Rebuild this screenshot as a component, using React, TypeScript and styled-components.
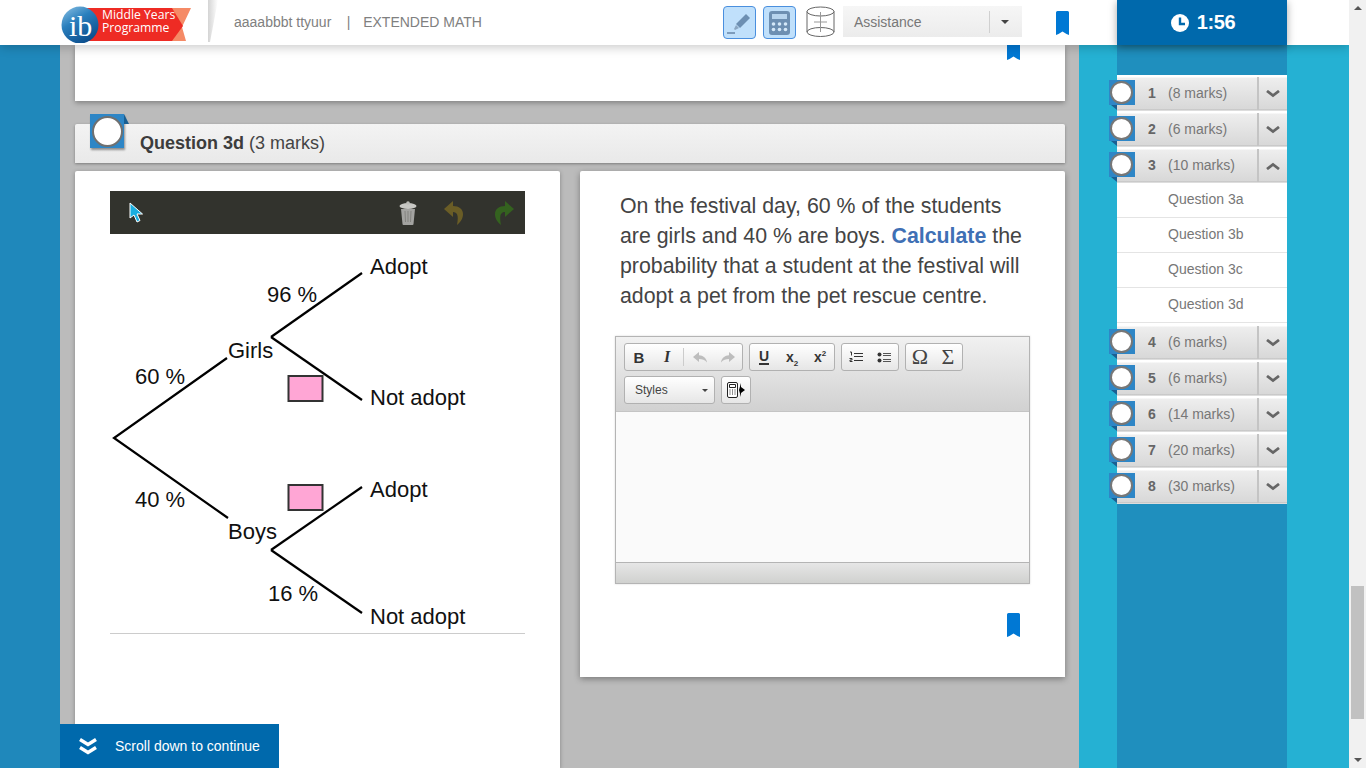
import styled, { createGlobalStyle } from 'styled-components'

const GlobalStyle = createGlobalStyle`
  html, body {
    margin: 0;
    height: 100%;
    overflow: hidden;
  }
  body {
    font-family: "Liberation Sans", Arial, sans-serif;
  }
  * {
    box-sizing: border-box;
  }
`

const Page = styled.div`
  width: 1366px;
  height: 768px;
  display: grid;
  grid-template-columns: 1349px 17px;
  overflow: hidden;
`

const Main = styled.div`
  position: relative;
  display: flex;
  flex-direction: column;
  height: 768px;
  overflow: hidden;
`

/* header */
const Header = styled.header`
  position: relative;
  z-index: 5;
  flex: none;
  height: 45px;
  background: #fff;
  box-shadow: 0 2px 10px rgba(0, 0, 0, 0.22);
  display: flex;
  align-items: center;
  padding-left: 61px;
`

const Slash = styled.div`
  width: 10px;
  height: 42px;
  margin: 0 16px 3px 17px;
  background: linear-gradient(90deg, #d4d4d4, #fff);
  clip-path: polygon(0 0, 100% 0, 20% 100%, 0 100%);
`

const Crumb = styled.span`
  font-size: 14px;
  color: #808080;
  white-space: pre;
  margin-bottom: 1px;
`

const Subject = styled(Crumb)`
  margin-left: 1px;
`

const Tools = styled.div`
  margin-left: 241px;
  display: flex;
  gap: 7px;
  align-items: center;
`

const ToolButton = styled.button`
  width: 33px;
  height: 33px;
  padding: 0;
  display: grid;
  place-items: center;
  background: #c0e0fb;
  border: 1px solid #4a8fde;
  border-radius: 4px;
`

const CylinderSlot = styled.div`
  margin: 0 0 2px 3px;
  height: 32px;
`

const Assistance = styled.div`
  width: 179px;
  height: 31px;
  margin: 0 34px 2px 8px;
  display: flex;
  align-items: center;
  background: linear-gradient(#f6f6f6, #ececec);
  font-size: 14px;
  color: #777;
  padding-left: 11px;
`

const AssistanceLabel = styled.span`
  width: 135px;
`

const AssistanceCaret = styled.span`
  height: 22px;
  flex: 1;
  border-left: 1px solid #d0d0d0;
  display: grid;
  place-items: center;
  padding-right: 2px;

  &::after {
    content: '';
    border: 4px solid transparent;
    border-top: 4px solid #444;
    border-bottom: 0;
  }
`

const Timer = styled.div`
  margin-left: auto;
  margin-right: 62px;
  width: 170px;
  height: 45px;
  background: #0069ac;
  box-shadow: 0 2px 8px rgba(0, 0, 0, 0.35);
  color: #fff;
  font-size: 20px;
  font-weight: 700;
  letter-spacing: -0.4px;
  display: flex;
  align-items: center;
  justify-content: center;
  gap: 8px;
  padding-left: 2px;
`

/* body columns */
const Columns = styled.div`
  flex: 1;
  display: grid;
  grid-template-columns: 60px 1019px 270px;
  min-height: 0;
`

const LeftStrip = styled.div`
  background: #1f88bb;
`

const Center = styled.main`
  background: #bbb;
  padding: 0 14px 0 15px;
  overflow: hidden;
`

const TopCard = styled.section`
  height: 56px;
  background: #fff;
  box-shadow: 0 2px 5px rgba(0, 0, 0, 0.3);
  display: flex;
  justify-content: flex-end;
  padding-right: 45px;
  overflow: hidden;
`

const TopMark = styled.div`
  margin-top: -9px;
`

const QuestionBar = styled.div`
  position: relative;
  height: 39px;
  margin-top: 23px;
  padding-left: 65px;
  display: flex;
  align-items: center;
  background: linear-gradient(#f3f3f3, #e9e9e9);
  border-radius: 2px 2px 0 0;
  box-shadow: 0 1px 3px rgba(0, 0, 0, 0.35);
  font-size: 18px;
  color: #444;
  white-space: pre;

  b {
    color: #3c3c3c;
  }
`

const QuestionBadge = styled.div`
  position: absolute;
  left: 15px;
  top: -10px;
  width: 34px;
  height: 34px;
  background: #2e86c6;
  box-shadow: 1px 2px 2px rgba(0, 0, 0, 0.4);
  display: grid;
  place-items: center;

  &::before {
    content: '';
    position: absolute;
    left: 100%;
    top: 0;
    border-left: 5px solid #1a5f92;
    border-top: 10px solid transparent;
  }
`

const QuestionCircle = styled.div`
  width: 31px;
  height: 31px;
  border-radius: 50%;
  background: #fff;
  border: 2px solid #707070;
`

const Panels = styled.div`
  display: grid;
  grid-template-columns: 485px 485px;
  column-gap: 20px;
  align-items: start;
  margin-top: 8px;
`

const DrawingPanel = styled.section`
  height: 597px;
  background: #fff;
  padding: 20px 35px 0;
  box-shadow: 0 1px 4px rgba(0, 0, 0, 0.3);
  border-radius: 2px 2px 0 0;
`

const DrawingBar = styled.div`
  height: 43px;
  background: #32332d;
  display: flex;
  align-items: center;
  padding-left: 19px;
`

const DrawingSpacer = styled.div`
  flex: 1;
`

const DrawingTool = styled.div<{ $width: number }>`
  width: ${({ $width }) => $width}px;
  display: grid;
  place-items: center;
`

const TreeFrame = styled.div`
  height: 400px;
  border-bottom: 1px solid #ccc;
`

const QuestionPanel = styled.section`
  height: 506px;
  background: #fff;
  padding: 20px 35px 0;
  box-shadow: 0 2px 6px rgba(0, 0, 0, 0.35);
  border-radius: 2px 2px 0 0;
`

const Prompt = styled.p`
  margin: 0 0 0 5px;
  font-size: 21.33px;
  line-height: 30px;
  color: #444;
  width: 416px;

  b {
    color: #3f70b5;
  }
`

const Editor = styled.div`
  margin-top: 25px;
  height: 248px;
  border: 1px solid #b4b4b4;
  box-shadow: 0 0 2px rgba(0, 0, 0, 0.15);
  display: flex;
  flex-direction: column;
`

const EditorTools = styled.div`
  height: 75px;
  flex: none;
  padding: 6px 8px 0;
  background: linear-gradient(#f1f1f1, #d1d1d1);
  border-bottom: 1px solid #c4c4c4;
  display: flex;
  flex-direction: column;
  gap: 5px;
`

const ToolRow = styled.div`
  display: flex;
  gap: 6px;
`

const BtnGroup = styled.div`
  height: 28px;
  display: flex;
  align-items: center;
  background: linear-gradient(#fff, #e6e6e6);
  border: 1px solid #b1b1b1;
  border-radius: 3px;
`

const Cell = styled.div`
  width: 28px;
  height: 26px;
  display: grid;
  place-items: center;
  color: #333;
`

const Sep = styled.div`
  width: 1px;
  height: 18px;
  margin: 0 2px;
  background: #ccc;
`

const BoldGlyph = styled.span`
  font-size: 15px;
  font-weight: 700;
`

const ItalicGlyph = styled.span`
  font-family: "Liberation Serif", serif;
  font-size: 16px;
  font-weight: 700;
  font-style: italic;
`

const UnderGlyph = styled.span`
  font-size: 14px;
  font-weight: 700;
  line-height: 14px;
  border-bottom: 2px solid #333;
`

const ScriptGlyph = styled.span`
  font-size: 14px;
  font-weight: 700;

  sub, sup {
    font-size: 8px;
    line-height: 0;
  }
`

const MathGlyph = styled.span`
  font-family: "Liberation Serif", serif;
  font-size: 22px;
  line-height: 22px;
  color: #444;
`

const StylesSelect = styled(BtnGroup)`
  width: 91px;
  padding: 0 6px 0 10px;
  justify-content: space-between;
  font-size: 12px;
  color: #444;

  &::after {
    content: '';
    border: 3px solid transparent;
    border-top: 3px solid #444;
    border-bottom: 0;
  }
`

const EditorArea = styled.div`
  flex: 1;
  background: #fafafa;
  border-bottom: 1px solid #b4b4b4;
`

const EditorStatus = styled.div`
  height: 20px;
  flex: none;
  background: linear-gradient(#e6e6e6, #d0d1cf);
`

const BottomMark = styled.div`
  margin: 29px 10px 0 0;
  display: flex;
  justify-content: flex-end;
`

/* right nav */
const RightStrip = styled.aside`
  background: #25b1d3;
  padding: 0 62px 0 38px;
`

const NavColumn = styled.nav`
  height: 100%;
  background: #1f8fbe;
  padding-top: 30px;
`

const NavList = styled.div`
  display: flex;
  flex-direction: column;
  background: #fff;
`

const NavRow = styled.div`
  position: relative;
  height: 36px;
  display: flex;
  align-items: center;
  background: linear-gradient(#fff 0, #fff 2px, #eee 3px, #d8d8d8 34px, #bbb 35px, #fff 36px);
  font-size: 14px;
  color: #777;
`

const RowBadge = styled.div`
  position: absolute;
  left: -8px;
  top: 5px;
  width: 26px;
  height: 25px;
  background: #2e86c6;
  display: grid;
  place-items: center;

  &::after {
    content: '';
    position: absolute;
    left: 2px;
    top: 100%;
    border-left: 6px solid transparent;
    border-top: 5px solid #1a5f92;
  }
`

const RowCircle = styled.div`
  width: 23px;
  height: 23px;
  margin-right: 2px;
  border-radius: 50%;
  background: #fff;
  border: 2px solid #777;
`

const RowNumber = styled.b`
  width: 20px;
  margin-left: 31px;
  color: #666;
  font-size: 14px;
`

const RowMarks = styled.span`
  flex: 1;
`

const RowToggle = styled.div`
  width: 30px;
  height: 33px;
  border-left: 2px solid #c4c4c4;
  display: grid;
  place-items: center;
  padding-top: 2px;
`

const SubList = styled.div`
  padding-bottom: 1px;
`

const SubItem = styled.div`
  height: 35px;
  display: flex;
  align-items: center;
  padding: 0 0 2px 51px;
  font-size: 14px;
  color: #777;
  border-bottom: 1px solid #e4e4e4;
`

/* floating scroll hint */
const ScrollHint = styled.div`
  position: absolute;
  left: 60px;
  bottom: 0;
  z-index: 4;
  width: 219px;
  height: 44px;
  background: #0069ac;
  color: #fff;
  font-size: 14px;
  display: flex;
  align-items: center;
  gap: 18px;
  padding-left: 19px;
`

/* scrollbar */
const Scrollbar = styled.div`
  background: #f1f1f1;
  display: flex;
  flex-direction: column;
  align-items: center;
`

const ScrollArrow = styled.div<{ $down?: boolean }>`
  width: 0;
  margin: ${({ $down }) => ($down ? 'auto 0 6px' : '6px 0 0')};
  border: 4px solid transparent;
  ${({ $down }) =>
    $down
      ? 'border-top: 4px solid #555; border-bottom: 0;'
      : 'border-bottom: 4px solid #555; border-top: 0;'}
`

const ScrollThumb = styled.div`
  width: 13px;
  height: 133px;
  margin-top: 576px;
  background: #c1c1c1;
`

/* drawings */
function Bookmark() {
  return (
    <svg width="13" height="24" viewBox="0 0 13 24">
      <path
        d="M1.5 0h10A1.5 1.5 0 0 1 13 1.5V24l-2.5-1-4-2.5-4 2.5L0 24V1.5A1.5 1.5 0 0 1 1.5 0z"
        fill="#0078d4"
      />
    </svg>
  )
}

function Logo() {
  return (
    <svg width="130" height="40" viewBox="0 0 130 40">
      <defs>
        <linearGradient id="globe" x1="0" y1="0" x2="0.6" y2="1">
          <stop offset="0" stopColor="#8fc4e6" />
          <stop offset="0.45" stopColor="#2a7fbd" />
          <stop offset="1" stopColor="#0d4f8e" />
        </linearGradient>
      </defs>
      <path d="M100 5h30l-9 19 4 14h-25z" fill="#f58a66" />
      <path d="M26 5h85l11 18-11 15H26z" fill="#ee2b24" />
      <circle cx="19" cy="22" r="18.5" fill="url(#globe)" />
      <text x="8" y="33" fontFamily="'Liberation Serif', serif" fontSize="30" fill="#fff">
        ib
      </text>
      <text x="41" y="16" fontFamily="'Open Sans', sans-serif" fontSize="12.2" fill="#fff">
        Middle Years
      </text>
      <text x="41" y="29" fontFamily="'Open Sans', sans-serif" fontSize="12.2" fill="#fff">
        Programme
      </text>
    </svg>
  )
}

function Highlighter() {
  return (
    <svg width="27" height="26" viewBox="0 0 27 26">
      <path d="M1 22h8v2H1z" fill="#7d9cbc" />
      <path d="M20 4l4 4-10 10-4-4z" fill="#6d8fb2" />
      <path d="M10 15l3 3-4 2-1-1z" fill="#8aa6c2" />
    </svg>
  )
}

function Calculator() {
  const keys = [0, 1, 2, 3, 4, 5]
  return (
    <svg width="21" height="24" viewBox="0 0 21 24">
      <rect width="21" height="24" rx="3" fill="#6d8fb2" />
      <rect x="3" y="3" width="15" height="5" fill="#b7d4ee" />
      {keys.map((k) => (
        <circle
          key={k}
          cx={4.5 + (k % 3) * 6}
          cy={13 + Math.floor(k / 3) * 5.5}
          r="1.8"
          fill="#d5e8f8"
        />
      ))}
    </svg>
  )
}

function Cylinder() {
  return (
    <svg width="29" height="32" viewBox="0 0 29 32" fill="none" stroke="#666">
      <ellipse cx="14.5" cy="5.5" rx="13.5" ry="4.5" />
      <path d="M1 5.5V26M28 5.5V26" />
      <ellipse cx="14.5" cy="26" rx="13.5" ry="4.5" />
      <path d="M14.5 6v20M8 16h13" stroke="#999" />
    </svg>
  )
}

function Clock() {
  return (
    <svg width="18" height="18" viewBox="0 0 18 18">
      <circle cx="9" cy="9" r="9" fill="#fff" />
      <path d="M9 3.5V10h5" fill="none" stroke="#0069ac" strokeWidth="2.4" />
    </svg>
  )
}

function Cursor() {
  return (
    <svg width="15" height="21" viewBox="0 0 15 21">
      <path d="M1 1v15l4-3 3 7 3-1.5-3-6.5h5.5z" fill="#19aee0" stroke="#fff" strokeWidth="1" />
    </svg>
  )
}

function Trash() {
  return (
    <svg width="18" height="24" viewBox="0 0 18 24">
      <ellipse cx="9" cy="5" rx="8.5" ry="3" fill="#c8c8c4" />
      <circle cx="9" cy="2" r="1.8" fill="#bdbdb9" />
      <path d="M2 8h14l-1.5 15a1 1 0 0 1-1 1h-9a1 1 0 0 1-1-1z" fill="#a3a3a0" />
      <path d="M6 10l.5 11M9 10v11M12 10l-.5 11" stroke="#83837f" />
    </svg>
  )
}

function CurvedArrow({ color, flip }: { color: string; flip?: boolean }) {
  return (
    <svg width="19" height="24" viewBox="0 0 19 24">
      <g transform={flip ? 'matrix(-1 0 0 1 19 0)' : undefined}>
        <path d="M9 0L0 8l9 8v-5c4 0 6 3 4 13 5-4 6-8 6-11 0-5-4-8-10-8z" fill={color} />
      </g>
    </svg>
  )
}

function TreeDiagram() {
  const paths = [
    'M252 39L161 103',
    'M161 103L252 166',
    'M117 124L4 204L118 284',
    'M252 253L161 316',
    'M161 316L252 379'
  ]
  const labels: [string, number, number][] = [
    ['Adopt', 260, 40],
    ['96 %', 157, 68],
    ['Girls', 118, 124],
    ['60 %', 25, 150],
    ['Not adopt', 260, 171],
    ['Adopt', 260, 263],
    ['40 %', 25, 273],
    ['Boys', 118, 305],
    ['16 %', 158, 367],
    ['Not adopt', 260, 390]
  ]
  return (
    <svg width="415" height="399" viewBox="0 0 415 399">
      {paths.map((d) => (
        <path key={d} d={d} fill="none" stroke="#000" strokeWidth="2.2" />
      ))}
      <rect x="178.5" y="142" width="34" height="25" fill="#ffa6d5" stroke="#333" strokeWidth="2" />
      <rect x="178.5" y="251" width="34" height="25" fill="#ffa6d5" stroke="#333" strokeWidth="2" />
      {labels.map(([text, x, y]) => (
        <text key={`${text}${y}`} x={x} y={y} fontSize="22" fill="#111">
          {text}
        </text>
      ))}
    </svg>
  )
}

function Chevron({ up }: { up?: boolean }) {
  return (
    <svg width="14" height="8" viewBox="0 0 14 8">
      <path
        d={up ? 'M1 7l6-4.5L13 7' : 'M1 1l6 4.5L13 1'}
        fill="none"
        stroke="#666"
        strokeWidth="2.8"
      />
    </svg>
  )
}

function DoubleChevron() {
  return (
    <svg width="18" height="17" viewBox="0 0 18 17" fill="none" stroke="#fff" strokeWidth="3.4">
      <path d="M1 1.5l8 5 8-5M1 9.5l8 5 8-5" />
    </svg>
  )
}

function ReplyIcon({ flip }: { flip?: boolean }) {
  return (
    <svg width="14" height="11" viewBox="0 0 14 11">
      <g transform={flip ? 'matrix(-1 0 0 1 14 0)' : undefined}>
        <path d="M6 0L0 5l6 5V7c3 0 6 .5 8 3.5C13.5 6 10 3.5 6 3.3z" fill="#bdbdbd" />
      </g>
    </svg>
  )
}

function OrderedIcon() {
  return (
    <svg width="14" height="12" viewBox="0 0 14 12" fill="none" stroke="#333">
      <path d="M5 2.5h9M5 5.5h9M5 9.5h9" />
      <path d="M1 1h1.5v3.5M0.5 7.5H3V9H1v1.5h2.5" strokeWidth="1" />
    </svg>
  )
}

function BulletIcon() {
  return (
    <svg width="15" height="11" viewBox="0 0 15 11">
      <circle cx="2.5" cy="2.5" r="2" fill="#333" />
      <circle cx="2.5" cy="8.5" r="2" fill="#333" />
      <path d="M6 1.5h8M6 3.5h8M6 7.5h8M6 9.5h8" stroke="#555" />
    </svg>
  )
}

function CalcInsertIcon() {
  return (
    <svg width="18" height="16" viewBox="0 0 18 16">
      <rect x="0.5" y="0.5" width="10" height="15" rx="1.5" fill="#fff" stroke="#222" />
      <path d="M2.5 2.5h6v3h-6z" fill="none" stroke="#222" />
      <path d="M2.5 8h1M5 8h1M7.5 8h1M2.5 10h1M5 10h1M7.5 10h1M2.5 12h1M5 12h1M7.5 12h1" stroke="#222" />
      <path d="M12 8l2-7v4l4 3-4 3v4z" fill="#000" />
    </svg>
  )
}

const sections = [
  { id: 1, marks: 8 },
  { id: 2, marks: 6 },
  { id: 3, marks: 10, parts: ['3a', '3b', '3c', '3d'] },
  { id: 4, marks: 6 },
  { id: 5, marks: 6 },
  { id: 6, marks: 14 },
  { id: 7, marks: 20 },
  { id: 8, marks: 30 }
]

export default function App() {
  return (
    <Page>
      <GlobalStyle />
      <Main>
        <Header>
          <Logo />
          <Slash />
          <Crumb>aaaabbbt ttyuur</Crumb>
          <Crumb>{'    |   '}</Crumb>
          <Subject>EXTENDED MATH</Subject>
          <Tools>
            <ToolButton>
              <Highlighter />
            </ToolButton>
            <ToolButton>
              <Calculator />
            </ToolButton>
            <CylinderSlot>
              <Cylinder />
            </CylinderSlot>
          </Tools>
          <Assistance>
            <AssistanceLabel>Assistance</AssistanceLabel>
            <AssistanceCaret />
          </Assistance>
          <Bookmark />
          <Timer>
            <Clock />
            1:56
          </Timer>
        </Header>
        <Columns>
          <LeftStrip />
          <Center>
            <TopCard>
              <TopMark>
                <Bookmark />
              </TopMark>
            </TopCard>
            <QuestionBar>
              <QuestionBadge>
                <QuestionCircle />
              </QuestionBadge>
              <b>Question 3d</b> (3 marks)
            </QuestionBar>
            <Panels>
              <DrawingPanel>
                <DrawingBar>
                  <Cursor />
                  <DrawingSpacer />
                  <DrawingTool $width={30}>
                    <Trash />
                  </DrawingTool>
                  <DrawingTool $width={60}>
                    <CurvedArrow color="#6a5d26" />
                  </DrawingTool>
                  <DrawingTool $width={42}>
                    <CurvedArrow color="#34621f" flip />
                  </DrawingTool>
                </DrawingBar>
                <TreeFrame>
                  <TreeDiagram />
                </TreeFrame>
              </DrawingPanel>
              <QuestionPanel>
                <Prompt>
                  On the festival day, 60 % of the students are girls and 40 % are boys.{' '}
                  <b>Calculate</b> the probability that a student at the festival will adopt a
                  pet from the pet rescue centre.
                </Prompt>
                <Editor>
                  <EditorTools>
                    <ToolRow>
                      <BtnGroup>
                        <Cell>
                          <BoldGlyph>B</BoldGlyph>
                        </Cell>
                        <Cell>
                          <ItalicGlyph>I</ItalicGlyph>
                        </Cell>
                        <Sep />
                        <Cell>
                          <ReplyIcon />
                        </Cell>
                        <Cell>
                          <ReplyIcon flip />
                        </Cell>
                      </BtnGroup>
                      <BtnGroup>
                        <Cell>
                          <UnderGlyph>U</UnderGlyph>
                        </Cell>
                        <Cell>
                          <ScriptGlyph>
                            x<sub>2</sub>
                          </ScriptGlyph>
                        </Cell>
                        <Cell>
                          <ScriptGlyph>
                            x<sup>2</sup>
                          </ScriptGlyph>
                        </Cell>
                      </BtnGroup>
                      <BtnGroup>
                        <Cell>
                          <OrderedIcon />
                        </Cell>
                        <Cell>
                          <BulletIcon />
                        </Cell>
                      </BtnGroup>
                      <BtnGroup>
                        <Cell>
                          <MathGlyph>Ω</MathGlyph>
                        </Cell>
                        <Cell>
                          <MathGlyph>Σ</MathGlyph>
                        </Cell>
                      </BtnGroup>
                    </ToolRow>
                    <ToolRow>
                      <StylesSelect>Styles</StylesSelect>
                      <BtnGroup>
                        <Cell>
                          <CalcInsertIcon />
                        </Cell>
                      </BtnGroup>
                    </ToolRow>
                  </EditorTools>
                  <EditorArea />
                  <EditorStatus />
                </Editor>
                <BottomMark>
                  <Bookmark />
                </BottomMark>
              </QuestionPanel>
            </Panels>
          </Center>
          <RightStrip>
            <NavColumn>
              <NavList>
                {sections.map(({ id, marks, parts }) => (
                  <div key={id}>
                    <NavRow>
                      <RowBadge>
                        <RowCircle />
                      </RowBadge>
                      <RowNumber>{id}</RowNumber>
                      <RowMarks>({marks} marks)</RowMarks>
                      <RowToggle>
                        <Chevron up={!!parts} />
                      </RowToggle>
                    </NavRow>
                    {parts && (
                      <SubList>
                        {parts.map((part) => (
                          <SubItem key={part}>Question {part}</SubItem>
                        ))}
                      </SubList>
                    )}
                  </div>
                ))}
              </NavList>
            </NavColumn>
          </RightStrip>
        </Columns>
        <ScrollHint>
          <DoubleChevron />
          Scroll down to continue
        </ScrollHint>
      </Main>
      <Scrollbar>
        <ScrollArrow />
        <ScrollThumb />
        <ScrollArrow $down />
      </Scrollbar>
    </Page>
  )
}
